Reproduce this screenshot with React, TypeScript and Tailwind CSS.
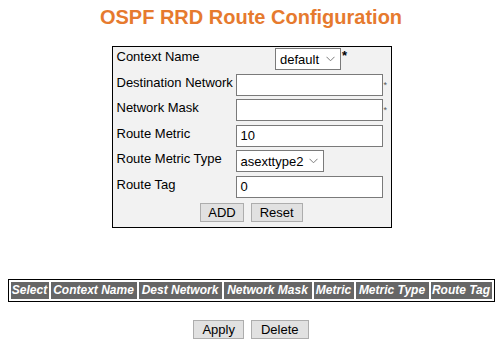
import React from "react";

const Chevron = () => (
  <svg width="9" height="6" viewBox="0 0 9 6" className="ml-auto mr-[5px]">
    <path d="M0.5 0.8 L4.5 4.8 L8.5 0.8" fill="none" stroke="#7c7c7c" strokeWidth="1" />
  </svg>
);

function Select({ value, w }: { value: string; w: string }) {
  return (
    <div className={`${w} h-[22px] bg-white border border-[#7a7a7a] flex items-center pl-[4px] text-[13px] leading-[15px] text-black`}>
      <span>{value}</span>
      <Chevron />
    </div>
  );
}

function TextInput({ value, req }: { value?: string; req?: boolean }) {
  return (
    <div className="flex items-start">
      <div className="w-[147px] h-[22px] bg-white border border-[#7a7a7a] flex items-center pl-[4px] text-[13px] leading-[15px] text-black">
        {value}
      </div>
      {req && <span className="text-[9px] leading-[9px] text-[#555] mt-[7px] ml-[1px]">*</span>}
    </div>
  );
}

function Row({ label, children }: { label: string; children: React.ReactNode }) {
  return (
    <div className="flex items-start h-[22px]">
      <div className="w-[123px] pl-[4px] pt-[1px] text-[13px] leading-[15px] text-black whitespace-nowrap">{label}</div>
      <div className="flex-1">{children}</div>
    </div>
  );
}

function Btn({ children, px }: { children: React.ReactNode; px: string }) {
  return (
    <div className={`h-[19px] ${px} bg-[#e1e1e1] border border-[#adadad] text-[13px] leading-[17px] text-black flex items-center`}>
      {children}
    </div>
  );
}

const cols: { t: string; w: string }[] = [
  { t: "Select", w: "w-[38px]" },
  { t: "Context Name", w: "w-[86px]" },
  { t: "Dest Network", w: "w-[83px]" },
  { t: "Network Mask", w: "w-[88px]" },
  { t: "Metric", w: "w-[40px]" },
  { t: "Metric Type", w: "w-[73px]" },
  { t: "Route Tag", w: "w-[61px]" },
];

export default function App() {
  return (
    <div className="w-[502px] h-[347px] bg-white font-['Liberation_Sans',Arial,sans-serif] flex flex-col items-center">
      <h1 className="pt-[6px] text-[20px] leading-[23px] font-bold text-[#e67a2e]">OSPF RRD Route Configuration</h1>

      <div className="mt-[17px] ml-[1px] w-[280px] border border-black bg-[#f2f2f2] pt-[1px] pb-[5px] flex flex-col gap-[3.5px]">
        <Row label="Context Name">
          <div className="flex items-start justify-center w-[155px] pr-[4px]">
            <Select value="default" w="w-[66px]" />
            <span className="text-[13px] leading-[13px] font-bold ml-[1px] mt-[1px]">*</span>
          </div>
        </Row>
        <Row label="Destination Network">
          <TextInput req />
        </Row>
        <Row label="Network Mask">
          <TextInput req />
        </Row>
        <Row label="Route Metric">
          <TextInput value="10" />
        </Row>
        <Row label="Route Metric Type">
          <Select value="asexttype2" w="w-[88px]" />
        </Row>
        <Row label="Route Tag">
          <TextInput value="0" />
        </Row>
        <div className="mt-[2px] flex justify-center gap-[7px]">
          <Btn px="px-[7px]">ADD</Btn>
          <Btn px="px-[8px]">Reset</Btn>
        </div>
      </div>

      <div className="mt-[51px] border border-black p-[2px] flex gap-[2px] bg-white">
        {cols.map((c) => (
          <div
            key={c.t}
            className={`${c.w} h-[17px] bg-[#666666] text-white text-[12px] leading-[17px] font-bold italic text-center whitespace-nowrap`}
          >
            {c.t}
          </div>
        ))}
      </div>

      <div className="mt-[18px] flex justify-center gap-[7px]">
        <Btn px="px-[8px]">Apply</Btn>
        <Btn px="px-[9px]">Delete</Btn>
      </div>
    </div>
  );
}
